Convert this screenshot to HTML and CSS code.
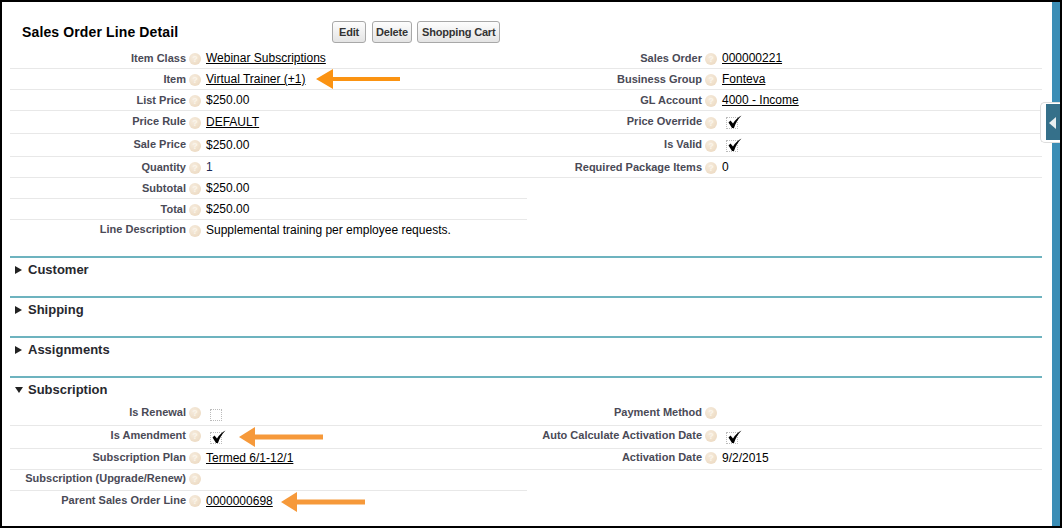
FILE: index.html
```html
<!DOCTYPE html>
<html lang="en">
<head>
    <meta charset="UTF-8">
    <title>Sales Order Line Detail</title>
    <link rel="stylesheet" href="styles.css">
</head>
<body>
    <div class="frame">
        <div class="page">
            <div class="head">
                <h2>Sales Order Line Detail</h2>
                <div class="buttons">
                    <button class="btn-edit">Edit</button>
                    <button class="btn-delete">Delete</button>
                    <button>Shopping Cart</button>
                </div>
            </div>

            <div class="fields main">
                <div class="col">
                    <div class="row"><span class="lbl">Item Class</span><i class="help">?</i><a href="#">Webinar Subscriptions</a></div>
                    <div class="row"><span class="lbl">Item</span><i class="help">?</i><a href="#">Virtual Trainer (+1)</a>
                        <svg class="arrow bright" width="84" height="20" viewBox="0 0 84 20"><path d="M0 10 17 0V8H84V12H17V20Z"/></svg>
                    </div>
                    <div class="row"><span class="lbl">List Price</span><i class="help">?</i><span>$250.00</span></div>
                    <div class="row tall"><span class="lbl">Price Rule</span><i class="help">?</i><a href="#">DEFAULT</a></div>
                    <div class="row tall"><span class="lbl">Sale Price</span><i class="help">?</i><span>$250.00</span></div>
                    <div class="row"><span class="lbl">Quantity</span><i class="help">?</i><span class="qty">1</span></div>
                    <div class="row"><span class="lbl">Subtotal</span><i class="help">?</i><span>$250.00</span></div>
                    <div class="row"><span class="lbl">Total</span><i class="help">?</i><span>$250.00</span></div>
                    <div class="row last"><span class="lbl">Line Description</span><i class="help">?</i><span>Supplemental training per employee requests.</span></div>
                </div>
                <div class="col">
                    <div class="row"><span class="lbl">Sales Order</span><i class="help">?</i><a href="#">000000221</a></div>
                    <div class="row"><span class="lbl">Business Group</span><i class="help">?</i><a href="#">Fonteva</a></div>
                    <div class="row"><span class="lbl">GL Account</span><i class="help">?</i><a href="#">4000 - Income</a></div>
                    <div class="row tall"><span class="lbl">Price Override</span><i class="help">?</i><span class="check"><svg width="14" height="14" viewBox="0 0 14 14"><path d="M.5 7.500 2.500 5.500 5 8.500C7 5 10 2.500 13.500 .5 10 4 7.500 8 6 13H4Z"/></svg></span></div>
                    <div class="row tall"><span class="lbl">Is Valid</span><i class="help">?</i><span class="check"><svg width="14" height="14" viewBox="0 0 14 14"><path d="M.5 7.500 2.500 5.500 5 8.500C7 5 10 2.500 13.500 .5 10 4 7.500 8 6 13H4Z"/></svg></span></div>
                    <div class="row"><span class="lbl">Required Package Items</span><i class="help">?</i><span>0</span></div>
                </div>
            </div>

            <div class="section">
                <h3><span class="tri right"></span>Customer</h3>
            </div>
            <div class="section">
                <h3><span class="tri right"></span>Shipping</h3>
            </div>
            <div class="section">
                <h3><span class="tri right"></span>Assignments</h3>
            </div>
            <div class="section open">
                <h3><span class="tri down"></span>Subscription</h3>
                <div class="fields">
                    <div class="col">
                        <div class="row tall"><span class="lbl">Is Renewal</span><i class="help">?</i><span class="check"></span></div>
                        <div class="row tall"><span class="lbl">Is Amendment</span><i class="help">?</i><span class="check"><svg width="14" height="14" viewBox="0 0 14 14"><path d="M.5 7.500 2.500 5.500 5 8.500C7 5 10 2.500 13.500 .5 10 4 7.500 8 6 13H4Z"/></svg></span>
                            <svg class="arrow after-check" width="84" height="20" viewBox="0 0 84 20"><path d="M0 10 16 0V7.500H84V12.500H16V20Z"/></svg>
                        </div>
                        <div class="row"><span class="lbl">Subscription Plan</span><i class="help">?</i><a href="#">Termed 6/1-12/1</a></div>
                        <div class="row"><span class="lbl">Subscription (Upgrade/Renew)</span><i class="help">?</i></div>
                        <div class="row last"><span class="lbl">Parent Sales Order Line</span><i class="help">?</i><a href="#">0000000698</a>
                            <svg class="arrow after-link" width="84" height="20" viewBox="0 0 84 20"><path d="M0 10 16 0V7.500H84V12.500H16V20Z"/></svg>
                        </div>
                    </div>
                    <div class="col">
                        <div class="row tall"><span class="lbl">Payment Method</span><i class="help">?</i></div>
                        <div class="row tall"><span class="lbl">Auto Calculate Activation Date</span><i class="help">?</i><span class="check"><svg width="14" height="14" viewBox="0 0 14 14"><path d="M.5 7.500 2.500 5.500 5 8.500C7 5 10 2.500 13.500 .5 10 4 7.500 8 6 13H4Z"/></svg></span></div>
                        <div class="row"><span class="lbl">Activation Date</span><i class="help">?</i><span>9/2/2015</span></div>
                    </div>
                </div>
            </div>
        </div>
        <div class="sidebar">
            <div class="handle"><span class="handle-arrow"></span></div>
        </div>
    </div>
</body>
</html>
```

FILE: styles.css
```css
* {
    box-sizing: border-box;
}
html, body {
    height: 100%;
}
body {
    margin: 0;
    font-family: "Liberation Sans", Arial, sans-serif;
    font-size: 12px;
    color: #000;
    background: #000;
}
.frame {
    display: flex;
    height: 100%;
    border: 2px solid #000;
    background: #fff;
}
.page {
    flex: 1;
    padding: 0 10px 0 8px;
}
.head {
    display: flex;
    align-items: center;
    height: 46px;
    padding: 14px 0 0 12px;
}
h2 {
    width: 310px;
    margin: 0;
    font-size: 14px;
    font-weight: bold;
    letter-spacing: .13px;
}
.buttons {
    display: flex;
    gap: 5px;
}
button {
    height: 22px;
    padding: 0 4px;
    font-family: inherit;
    font-size: 11px;
    font-weight: bold;
    letter-spacing: -.18px;
    color: #333;
    background: linear-gradient(#fdfdfd, #e4e4e4);
    border: 1px solid #a8a8a8;
    border-radius: 3px;
}
.btn-edit {
    width: 34px;
    margin-right: 1px;
}
.btn-delete {
    width: 40px;
    padding: 0;
}
.fields {
    display: flex;
}
.fields.main {
    margin-bottom: 15px;
}
.col {
    width: 517px;
}
.col + .col {
    width: 515px;
}
.row {
    display: flex;
    align-items: center;
    height: 21px;
    border-bottom: 1px solid #e8e8e8;
    white-space: nowrap;
}
.row.tall {
    height: 23px;
}
.row.last {
    border-bottom: none;
}
.lbl {
    width: 176px;
    text-align: right;
    font-size: 11px;
    font-weight: bold;
    color: #4a4a56;
}
.col + .col .lbl {
    width: 175px;
}
.main .tall .lbl,
.main .last .lbl {
    margin-bottom: 2px;
}
.main .last {
    padding-bottom: 1px;
}
.main .help {
    margin-top: 2px;
}
.open .row {
    padding-bottom: 2px;
}
.open .lbl {
    margin-bottom: 2px;
}
.open .check {
    margin-top: 4px;
}
.open .arrow {
    margin-top: 2px;
}
.help {
    flex: none;
    width: 12px;
    height: 12px;
    margin: 0 5px 0 3px;
    font-size: 9px;
    font-style: normal;
    font-weight: bold;
    line-height: 12px;
    text-align: center;
    color: #fbf5ea;
    background: radial-gradient(circle at 40% 35%, #f6ecde, #ead6bc);
    border-radius: 50%;
}
a {
    color: #000;
}
.qty {
    color: #1a2a55;
}
.check {
    position: relative;
    width: 12px;
    height: 12px;
    margin: 2px 0 0 4px;
    border: 1px dotted #bbb;
}
.check svg {
    position: absolute;
    left: 1px;
    top: -3px;
}
.arrow {
    flex: none;
    margin-left: 10px;
    fill: #f6993a;
}
.arrow.bright {
    fill: #fb9312;
}
.arrow.after-check {
    margin-left: 17px;
}
.arrow.after-link {
    margin-left: 8px;
}
.section {
    height: 40px;
    border-top: 2px solid #6db3bf;
}
.section.open {
    height: auto;
}
.section h3 {
    display: flex;
    align-items: center;
    height: 23px;
    margin: 0 0 2px;
    padding-left: 5px;
    font-size: 13px;
    font-weight: bold;
    color: #27282e;
}
.tri {
    width: 0;
    height: 0;
    margin-right: 6px;
    border-style: solid;
    border-color: transparent;
}
.tri.right {
    border-width: 4px 0 4px 7px;
    border-left-color: #222;
}
.tri.down {
    margin-right: 5px;
    border-width: 6px 4px 0;
    border-top-color: #222;
}
.sidebar {
    position: relative;
    flex: none;
    width: 8px;
    background: #3b8db5;
}
.handle {
    position: absolute;
    top: 100px;
    left: -12px;
    width: 20px;
    height: 41px;
    padding: 1px 0 2px 5px;
    background: #fff;
    border: 1px solid #ddd;
    border-right: none;
    border-radius: 5px 0 0 5px;
}
.handle::before {
    content: "";
    display: block;
    height: 100%;
    background: #35708a;
}
.handle-arrow {
    position: absolute;
    top: 14px;
    left: 8px;
    width: 0;
    height: 0;
    border-style: solid;
    border-width: 6.500px 7px 6.500px 0;
    border-color: transparent #e8eef0 transparent transparent;
}
```
